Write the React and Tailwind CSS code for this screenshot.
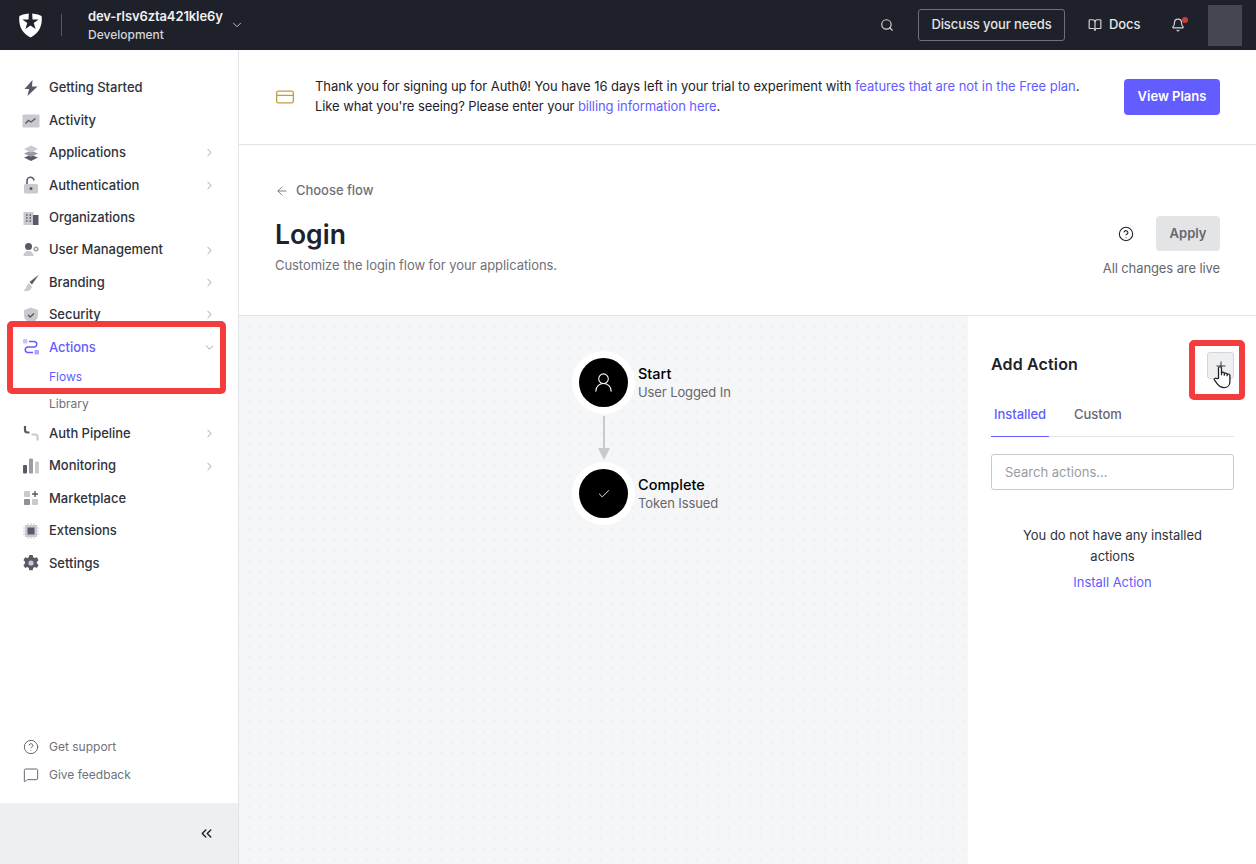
import { ChevronRight, ChevronDown, ChevronsLeft, Search, BookOpen, Bell, CreditCard, ArrowLeft, CircleHelp, MessageSquare, UserRound, Check, Plus } from 'lucide-react';

const DARK = '#585a68';
const LIGHT = '#c9cace';

const Svg = ({ children }) => (
  <svg width="18" height="18" viewBox="0 0 18 18" fill="none">{children}</svg>
);

const icons = {
  zap: <Svg><path d="M10.5 1 2.500 10H7L5.500 17 15.500 7.500H10z" fill={DARK} /></Svg>,
  activity: (
    <Svg>
      <rect x="0.500" y="2.500" width="17" height="13" rx="1" fill={LIGHT} />
      <path d="M3.500 11.500 6.500 8.500 9 10l4.500-3.500" stroke={DARK} strokeWidth="1.400" />
    </Svg>
  ),
  apps: (
    <Svg>
      <path d="M9 11 16 13.500 9 17 2 13.500z" fill={DARK} />
      <path d="M9 6.500 16 9.500 9 13 2 9.500z" fill="#9a9ba3" />
      <path d="M9 1.500 16 5 9 8.500 2 5z" fill={LIGHT} />
    </Svg>
  ),
  lock: (
    <Svg>
      <path d="M5 8V5a3.500 3.500 0 0 1 7-.5" stroke={DARK} strokeWidth="1.600" />
      <rect x="2" y="8" width="14" height="9.500" rx="1.500" fill={LIGHT} />
      <circle cx="9" cy="12.500" r="1.500" fill={DARK} />
    </Svg>
  ),
  org: (
    <Svg>
      <rect x="1.500" y="3" width="10" height="13" fill={LIGHT} />
      <rect x="11" y="6" width="5.500" height="10" fill={DARK} />
      <path d="M4 6h1.500M7.500 6H9M4 9h1.500M7.500 9H9M4 12h1.500M7.500 12H9M13 9h1.500M13 12h1.500" stroke={DARK} strokeWidth="1.400" />
    </Svg>
  ),
  users: (
    <Svg>
      <circle cx="6.500" cy="5.500" r="3.500" fill={DARK} />
      <path d="M1.500 15c0-3 2-5 5-5s5 2 5 5z" fill={LIGHT} />
      <circle cx="14" cy="8" r="1.800" stroke="#9a9ba3" strokeWidth="1.400" />
    </Svg>
  ),
  brush: (
    <Svg>
      <path d="M17 .5 7.500 8l2.500 2.500z" fill={DARK} />
      <path d="M7 9.500c-2.500.5-2 4.500-5.500 7.500 3.500.5 7.500 0 8.500-4.500z" fill={LIGHT} />
    </Svg>
  ),
  shield: (
    <Svg>
      <path d="M9 1.500 16 4v5.500c0 3.500-3 6-7 7.500-4-1.500-7-4-7-7.500V4z" fill={LIGHT} />
      <path d="m6 9 2.200 2L12 7.500" stroke={DARK} strokeWidth="1.500" />
    </Svg>
  ),
  actions: (
    <Svg>
      <rect x="1" y="1" width="4.500" height="4.500" rx="0.800" fill="#c5c3ff" />
      <rect x="12.500" y="12" width="4.500" height="4.500" rx="0.800" fill="#a9a6ff" />
      <path d="M7 3.500h5.500a2.800 2.800 0 0 1 0 5.500h-7a2.800 2.800 0 0 0 0 5.500H11" stroke="#635dff" strokeWidth="1.500" />
    </Svg>
  ),
  pipeline: (
    <Svg>
      <path d="M3 1v4c0 1.500 1 2.500 2.500 2.500h2" stroke={DARK} strokeWidth="2.200" />
      <path d="M9.500 9.500H13c1.500 0 2.500 1 2.500 2.500v3.500" stroke={LIGHT} strokeWidth="2.200" />
    </Svg>
  ),
  bars: (
    <Svg>
      <rect x="1" y="8" width="4" height="8.500" rx="1" fill={DARK} />
      <rect x="7" y="1.500" width="4" height="15" rx="1" fill="#9a9ba3" />
      <rect x="13" y="4.500" width="4" height="12" rx="1" fill={LIGHT} />
    </Svg>
  ),
  market: (
    <Svg>
      <rect x="2" y="2" width="6" height="6" rx="0.800" fill={LIGHT} />
      <rect x="2" y="10" width="6" height="6" rx="0.800" fill="#8f909a" />
      <rect x="10" y="10" width="6" height="6" rx="0.800" fill={LIGHT} />
      <path d="M13 2v6M10 5h6" stroke={DARK} strokeWidth="1.400" />
    </Svg>
  ),
  chip: (
    <Svg>
      <rect x="3" y="3" width="12" height="12" fill={LIGHT} />
      <rect x="5.500" y="5.500" width="7" height="7" fill={DARK} />
      <path d="M6 1v16M9 1v16M12 1v16M1 6h16M1 9h16M1 12h16" stroke={LIGHT} strokeWidth="1" strokeDasharray="2.500 11.500" />
    </Svg>
  ),
  gear: (
    <Svg>
      <path d="M7.300 1h3.400l.5 2.300 1.500.8 2.200-.8 1.700 3-1.700 1.500v1.600l1.700 1.500-1.700 3-2.200-.8-1.500.8-.5 2.300H7.300l-.5-2.300-1.500-.8-2.200.8-1.700-3 1.700-1.500V7.800L1.400 6.300l1.700-3 2.200.8 1.500-.8z" fill={DARK} />
      <circle cx="9" cy="9" r="2.600" fill={LIGHT} />
    </Svg>
  ),
};

const NAV = [
  { label: 'Getting Started', icon: 'zap' },
  { label: 'Activity', icon: 'activity' },
  { label: 'Applications', icon: 'apps', more: true },
  { label: 'Authentication', icon: 'lock', more: true },
  { label: 'Organizations', icon: 'org' },
  { label: 'User Management', icon: 'users', more: true },
  { label: 'Branding', icon: 'brush', more: true },
  { label: 'Security', icon: 'shield', more: true },
  { label: 'Actions', icon: 'actions', open: true, children: ['Flows', 'Library'] },
  { label: 'Auth Pipeline', icon: 'pipeline', more: true },
  { label: 'Monitoring', icon: 'bars', more: true },
  { label: 'Marketplace', icon: 'market' },
  { label: 'Extensions', icon: 'chip' },
  { label: 'Settings', icon: 'gear' },
];

function NavItem({ item }) {
  return (
    <>
      <div className="flex h-[32.4px] items-center pl-[22px] pr-[22px]">
        <span className="flex w-[27px] shrink-0">{icons[item.icon]}</span>
        <span className={`flex-1 text-[13px] font-medium tracking-[-0.03px] ${item.open ? 'text-[#635dff]' : 'text-[#2f323b]'}`}>{item.label}</span>
        {item.more && <ChevronRight size={13} strokeWidth={1.5} className="text-[#8a8c94]" />}
        {item.open && <ChevronDown size={13} strokeWidth={1.5} className="text-[#8a8c94]" />}
      </div>
      {item.children?.map((c, i) => (
        <div key={c} className={`flex h-[27px] items-center pl-[49px] text-xs ${i === 0 ? 'text-[#635dff]' : 'text-[#6f7178]'}`}>{c}</div>
      ))}
    </>
  );
}

function Sidebar() {
  return (
    <aside className="flex w-[239px] shrink-0 flex-col border-r border-[#e3e4e6] bg-white">
      <nav className="pt-[22px]">
        {NAV.map(item => <NavItem key={item.label} item={item} />)}
      </nav>
      <div className="mt-auto flex flex-col gap-[10px] pb-[19px] pl-[23px] text-xs text-[#6f7178]">
        <div className="flex h-[18px] items-center gap-[10px]">
          <CircleHelp size={16} strokeWidth={1.4} className="text-[#585a68]" />Get support
        </div>
        <div className="flex h-[18px] items-center gap-[10px]">
          <MessageSquare size={16} strokeWidth={1.4} className="text-[#585a68]" />Give feedback
        </div>
      </div>
      <div className="flex h-[61px] items-center justify-end bg-[#eeeff1] pr-[23px]">
        <ChevronsLeft size={17} strokeWidth={2} className="text-[#1e212a]" />
      </div>
    </aside>
  );
}

function TopBar() {
  return (
    <header className="flex h-[50px] shrink-0 items-center bg-[#1e212a] pl-[19px] pr-[14px]">
      <svg width="23" height="25" viewBox="0 0 23 25">
        <path
          fillRule="evenodd"
          fill="#fff"
          d="M9.800 .4 4 1.500 .4 3C-.2 8 .5 13 3 17 5 20 8 22.500 11.500 24.500 15 22.500 18 20 20 17 22.500 13 23.200 8 22.600 3L19 1.500 13.200 .4 13.500 6.400H19.700L14.700 10.100 16.600 16 11.500 12.400 6.400 16 8.300 10.100 3.300 6.400H9.500z"
        />
      </svg>
      <div className="ml-[19px] h-[22px] w-px bg-[#55585f]" />
      <div className="ml-[26px] flex flex-col gap-[3px]">
        <span className="text-[13px] leading-[16px] font-semibold tracking-[-0.1px] text-[#eff0f2]">dev-rlsv6zta421kle6y</span>
        <span className="text-xs leading-[16px] font-medium text-[#d3d5d9]">Development</span>
      </div>
      <ChevronDown size={14} strokeWidth={1.5} className="ml-[7px] text-[#d3d5d9]" />
      <Search size={14} className="ml-auto text-[#d3d5d9]" />
      <div className="ml-[24px] flex h-[32px] w-[147px] items-center justify-center rounded-[3px] border border-[#6f7178] text-[13px] font-medium tracking-[-0.1px] text-[#e3e4e6]">Discuss your needs</div>
      <BookOpen size={14} className="ml-[23px] text-[#d3d5d9]" />
      <span className="ml-[7px] w-[31px] text-[13px] font-medium tracking-[-0.1px] text-[#e3e4e6]">Docs</span>
      <div className="relative ml-[31px] flex">
        <Bell size={14} className="text-[#d3d5d9]" />
        <span className="absolute -top-[1px] -right-[3px] h-[6px] w-[6px] rounded-full bg-[#d03c38]" />
      </div>
      <div className="ml-[23px] h-[41px] w-[34px] bg-[#44474f]" />
    </header>
  );
}

function Banner() {
  return (
    <div className="flex h-[95px] shrink-0 items-center border-b border-[#e3e4e6] pl-[36px] pr-[36px]">
      <CreditCard size={20} strokeWidth={1.6} className="shrink-0 text-[#bf9f3f]" />
      <p className="-mt-[2px] ml-[20px] flex-1 text-[13px] leading-[20px] tracking-[-0.045px] text-[#1e212a] [font-feature-settings:'zero']">
        Thank you for signing up for Auth0! You have 16 days left in your trial to experiment with <span className="text-[#635dff]">features that are not in the Free plan</span>.<br />
        <span className="tracking-[-0.09px]">Like what you're seeing? Please enter your <span className="text-[#635dff]">billing information here</span>.</span>
      </p>
      <button className="flex h-[36px] w-[96px] items-center justify-center rounded-[4px] bg-[#635dff] text-[13px] font-semibold text-white">View Plans</button>
    </div>
  );
}

function PageHead() {
  return (
    <div className="flex h-[171px] shrink-0 border-b border-[#e3e4e6] px-[36px] pt-[37px]">
      <div className="flex-1">
        <div className="flex h-[18px] items-center gap-[7px] text-[13px] font-medium tracking-[-0.03px] text-[#6f7178]">
          <ArrowLeft size={14} strokeWidth={1.5} />Choose flow
        </div>
        <h1 className="mt-[16px] text-[26.5px] leading-[36px] font-semibold text-[#1e212a]">Login</h1>
        <p className="mt-[3px] text-[13px] leading-[20px] tracking-[-0.06px] text-[#6f7178]">Customize the login flow for your applications.</p>
      </div>
      <div className="flex flex-col items-end pt-[34px]">
        <div className="flex items-center gap-[22px]">
          <CircleHelp size={16} strokeWidth={1.6} className="text-[#1e212a]" />
          <button className="flex h-[35px] w-[64px] items-center justify-center rounded-[4px] bg-[#e3e4e6] text-[13px] font-semibold text-[#65676e]">Apply</button>
        </div>
        <span className="mt-[8px] text-[13px] leading-[18px] tracking-[-0.1px] text-[#65676e]">All changes are live</span>
      </div>
    </div>
  );
}

function FlowNode({ title, sub, children }) {
  return (
    <div className="relative flex h-[63px] w-[63px] items-center justify-center rounded-full bg-white">
      <div className="flex h-[49px] w-[49px] items-center justify-center rounded-full bg-black text-white">{children}</div>
      <div className="absolute left-[66px] top-[14px] whitespace-nowrap">
        <div className="text-[14.5px] leading-[18px] font-medium text-black">{title}</div>
        <div className="text-[13px] leading-[18px] tracking-[-0.1px] text-[#65676e]">{sub}</div>
      </div>
    </div>
  );
}

function FlowCanvas() {
  return (
    <div className="flex flex-1 flex-col items-center bg-[#f5f6f8] bg-[radial-gradient(circle,#eeeff3_1px,transparent_1.2px)] bg-[size:10.67px_10.67px] bg-[position:5px_5px] pt-[35px]">
      <FlowNode title="Start" sub="User Logged In"><UserRound size={23} strokeWidth={1.1} /></FlowNode>
      <div className="mt-[2px] h-[32px] w-[2px] bg-[#c9cace]" />
      <div className="mb-[2px] h-0 w-0 border-x-[6.5px] border-t-[12px] border-x-transparent border-t-[#c9cace]" />
      <FlowNode title="Complete" sub="Token Issued"><Check size={14} strokeWidth={1.5} /></FlowNode>
    </div>
  );
}

function ActionPanel() {
  return (
    <div className="flex w-[288px] shrink-0 flex-col bg-white pl-[23px] pr-[22px] pt-[36px]">
      <div className="flex h-[27px] items-center justify-between">
        <h2 className="pb-[3px] text-base font-semibold tracking-[0.15px] text-[#1e212a]">Add Action</h2>
        <button className="flex h-[27px] w-[27px] items-center justify-center rounded-[3px] border border-[#d3d5d9] bg-[#eeeff1] text-[#1e212a]">
          <Plus size={14} strokeWidth={1.5} />
        </button>
      </div>
      <div className="mt-[22px] flex border-b border-[#e3e4e6] text-[13px] font-medium tracking-[-0.03px]">
        <div className="-mb-px h-[36px] w-[58px] border-b border-[#635dff] pt-[4px] text-center leading-[18px] text-[#635dff]">Installed</div>
        <div className="ml-[25px] pt-[4px] leading-[18px] text-[#65676e]">Custom</div>
      </div>
      <input
        placeholder="Search actions..."
        className="mt-[17px] h-[36px] rounded-[3px] border border-[#c9cace] px-[13px] text-[13px] outline-none placeholder:text-[#9a9ba3]"
      />
      <p className="mx-auto mt-[35px] w-[200px] text-center text-[13px] leading-[21px] tracking-[-0.03px] text-[#2f323b]">You do not have any installed actions</p>
      <span className="mt-[5px] text-center text-[13px] leading-[21px] tracking-[-0.03px] text-[#635dff]">Install Action</span>
    </div>
  );
}

export default function App() {
  return (
    <div className="relative flex h-[864px] w-[1256px] flex-col overflow-hidden bg-white font-['Inter',sans-serif]">
      <TopBar />
      <div className="flex min-h-0 flex-1">
        <Sidebar />
        <main className="flex min-w-0 flex-1 flex-col">
          <Banner />
          <PageHead />
          <div className="flex min-h-0 flex-1">
            <FlowCanvas />
            <ActionPanel />
          </div>
        </main>
      </div>

      {/* red callouts from the screenshot */}
      <div className="absolute left-[7px] top-[321px] h-[73px] w-[219px] rounded-[5px] border-[6px] border-[#f43c3c]" />
      <div className="absolute left-[1189px] top-[340px] h-[60px] w-[56px] rounded-[5px] border-[6px] border-[#f43c3c]" />
      <svg className="absolute left-[1213px] top-[365px]" width="20" height="24" viewBox="0 0 20 27" preserveAspectRatio="none">
        <path d="M5.500 15V3.500a1.500 1.500 0 0 1 3 0V11V9.500a1.400 1.400 0 0 1 2.800 0V11.500V10.500a1.400 1.400 0 0 1 2.800 0V12V11.500a1.400 1.400 0 0 1 2.800 0V19c0 3.500-2.200 6.500-6 6.500-3.200 0-4.600-1.300-6-3.500L1.500 17c-.9-1.500 1.100-3 2.300-1.700z" fill="#fff" stroke="#1e212a" strokeWidth="1.300" strokeLinejoin="round" />
      </svg>
    </div>
  );
}
